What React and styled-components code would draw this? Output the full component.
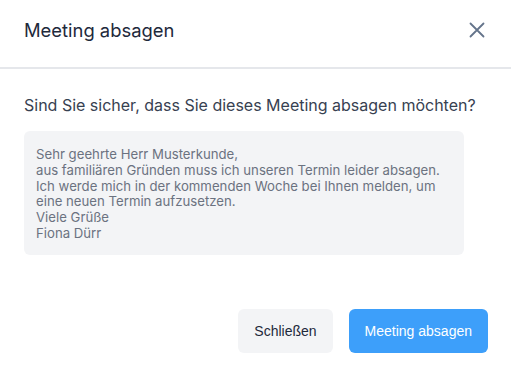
import React from 'react'
import styled, { createGlobalStyle } from 'styled-components'

const Global = createGlobalStyle`
  html, body { margin: 0; padding: 0; background: #fff; }
  body { font-family: Inter, "Noto Sans", sans-serif; }
`

export default function App() {
  return (
    <>
      <Global />
      <Modal>
        <Header>
          <Title>Meeting absagen</Title>
          <CloseButton aria-label="Schließen">
            <svg width="16" height="16" viewBox="0 0 16 16" fill="none">
              <path d="M1.5 1.5L14.5 14.5M14.5 1.5L1.5 14.5" stroke="#64748b" strokeWidth="1.8" strokeLinecap="round" />
            </svg>
          </CloseButton>
        </Header>
        <Body>
          <Question>Sind Sie sicher, dass Sie dieses Meeting absagen möchten?</Question>
          <Message>
            Sehr geehrte Herr Musterkunde,<br />
            aus familiären Gründen muss ich unseren Termin leider absagen.<br />
            Ich werde mich in der kommenden Woche bei Ihnen melden, um<br />
            eine neuen Termin aufzusetzen.<br />
            Viele Grüße<br />
            Fiona Dürr
          </Message>
        </Body>
        <Footer>
          <Button>Schließen</Button>
          <Button primary>Meeting absagen</Button>
        </Footer>
      </Modal>
    </>
  )
}

const Modal = styled.div`
  width: 511px;
  height: 373px;
  display: flex;
  flex-direction: column;
  background: #fff;
`

const Header = styled.div`
  height: 69px;
  box-sizing: border-box;
  display: flex;
  align-items: center;
  justify-content: space-between;
  padding: 0 26px 7px 24px;
  border-bottom: 2px solid #e5e7eb;
`

const Title = styled.h2`
  margin: 0;
  font-size: 18.4px;
  font-weight: 400;
  color: #1e293b;
`

const CloseButton = styled.button`
  border: none;
  background: none;
  padding: 0;
  display: flex;
  cursor: pointer;
`

const Body = styled.div`
  padding: 25px 24px 0;
  display: flex;
  flex-direction: column;
  gap: 15px;
`

const Question = styled.p`
  margin: 0;
  font-size: 16px;
  line-height: 22px;
  color: #374151;
`

const Message = styled.div`
  width: 440px;
  height: 124px;
  box-sizing: border-box;
  padding: 16px 12px 10px;
  background: #f3f4f6;
  border-radius: 6px;
  font-size: 13.2px;
  line-height: 15.8px;
  color: #6b7280;
`

const Footer = styled.div`
  margin-top: auto;
  display: flex;
  justify-content: flex-end;
  gap: 16px;
  padding: 0 23px 20px;
`

const Button = styled.button`
  height: 44px;
  padding: 0 16px;
  border: none;
  border-radius: 6px;
  font-family: "Liberation Sans", Arial, sans-serif;
  font-size: 14px;
  background: ${p => (p.primary ? '#3d9ffa' : '#f3f4f6')};
  color: ${p => (p.primary ? '#fff' : '#1e293b')};
  cursor: pointer;
`
